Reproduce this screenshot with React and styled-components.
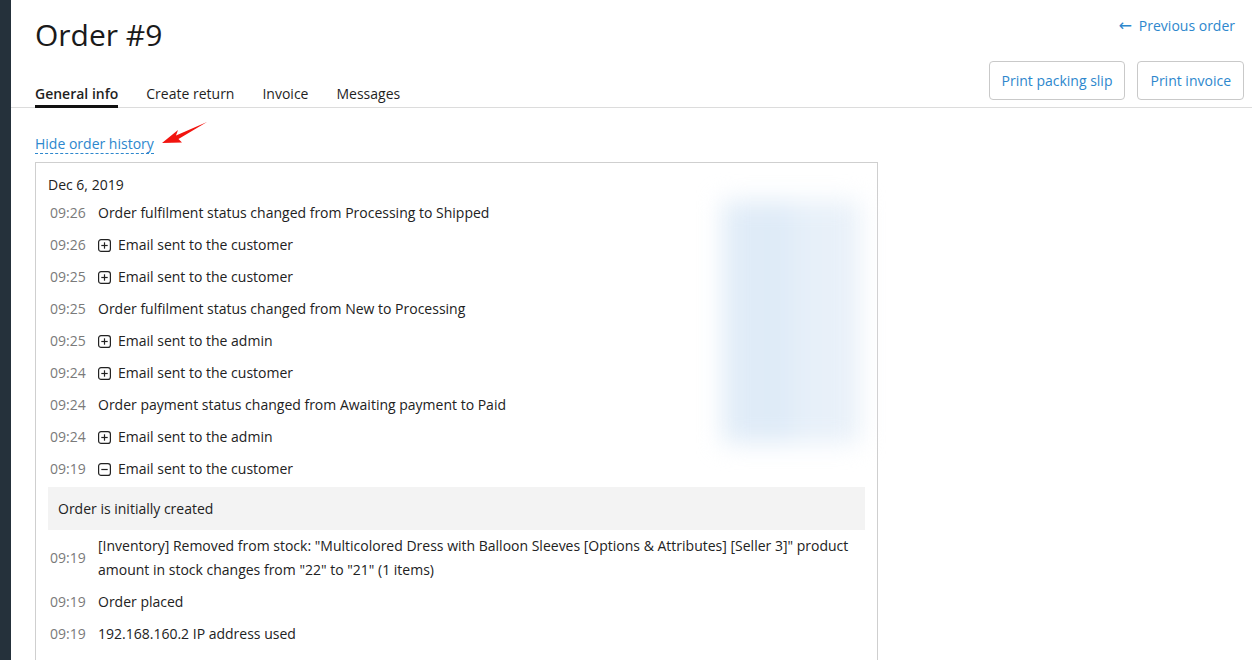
import React from 'react'
import styled, { createGlobalStyle } from 'styled-components'

const GlobalStyle = createGlobalStyle`
  html, body {
    margin: 0;
    padding: 0;
    background: #fff;
    overflow: hidden;
  }
  body {
    font-family: "Open Sans", "Liberation Sans", sans-serif;
    font-size: 14px;
    color: #222;
  }
`

const Page = styled.div`
  display: flex;
  min-height: 660px;
`

const Sidebar = styled.div`
  width: 11px;
  flex-shrink: 0;
  background: #25313b;
`

const Main = styled.main`
  flex: 1;
  min-width: 0;
`

const Header = styled.header`
  border-bottom: 1px solid #dcdcdc;
`

const TopRow = styled.div`
  display: flex;
  justify-content: space-between;
  align-items: flex-start;
  padding: 15px 17px 0 24px;
`

const Title = styled.h1`
  margin: 0;
  font-size: 30px;
  line-height: 40px;
  font-weight: 400;
  color: #1a1a1a;
`

const PrevLink = styled.a`
  margin-top: 1px;
  color: #2d87cd;
  line-height: 20px;
  text-decoration: none;
  cursor: pointer;
`

const Arrow = styled.span`
  font-family: "DejaVu Sans", sans-serif;
  font-size: 16px;
  margin-right: 7px;
`

const BottomRow = styled.div`
  display: flex;
  justify-content: space-between;
  align-items: flex-end;
  padding: 0 8px 0 24px;
  margin-top: 6px;
`

const Tabs = styled.nav`
  display: flex;
  gap: 28px;
`

const Tab = styled.a`
  line-height: 20px;
  padding-bottom: 1px;
  margin-bottom: -1px;
  border-bottom: 3px solid ${p => (p.$active ? '#111' : 'transparent')};
  font-weight: ${p => (p.$active ? 600 : 400)};
  color: #1f1f1f;
  cursor: pointer;
`

const Actions = styled.div`
  display: flex;
  gap: 12px;
  margin-bottom: 7px;
`

const Button = styled.button`
  height: 39px;
  padding: 0 12px;
  border: 1px solid #c9c9c9;
  border-radius: 4px;
  background: #fff;
  color: #2d87cd;
  font-family: inherit;
  font-size: 14px;
  cursor: pointer;
`

const Content = styled.section`
  padding: 27px 24px 0 24px;
`

const LinkRow = styled.div`
  position: relative;
  display: flex;
`

const ToggleLink = styled.a`
  color: #2d87cd;
  line-height: 18px;
  border-bottom: 1px dashed #2d87cd;
  cursor: pointer;
`

const Annotation = styled.svg`
  position: absolute;
  left: 125px;
  top: -14px;
`

const History = styled.div`
  position: relative;
  width: 843px;
  box-sizing: border-box;
  margin-top: 8px;
  padding: 10px 12px 0;
  border: 1px solid #cfcfcf;
  border-bottom: none;
`

const DateLine = styled.div`
  line-height: 24px;
`

const Row = styled.div`
  display: grid;
  grid-template-columns: 50px 1fr;
  align-items: center;
  padding: 4px 0;
  line-height: 24px;
`

const Time = styled.span`
  padding-left: 2px;
  color: #7a7a7a;
`

const Event = styled.span`
  display: flex;
  align-items: center;
  gap: 7px;
`

const Note = styled.div`
  margin-top: 2px;
  padding: 11px 10px;
  line-height: 21px;
  background: #f3f3f3;
`

const Blurred = styled.div`
  position: absolute;
  top: 38px;
  left: 686px;
  width: 138px;
  height: 242px;
  background: linear-gradient(90deg, #e2edf8 0%, #ddeaf7 40%, #e7f0f9 60%, #e9f1f9 100%);
  filter: blur(12px);
  pointer-events: none;
`

const ToggleIcon = ({ open }) => (
  <svg width="13" height="13" viewBox="0 0 13 13" fill="none" stroke="#222" strokeWidth="1.2">
    <rect x="0.6" y="0.6" width="11.8" height="11.8" rx="2.5" />
    <path d="M3.3 6.5h6.4" />
    {!open && <path d="M6.5 3.3v6.4" />}
  </svg>
)

const events = [
  { time: '09:26', text: 'Order fulfilment status changed from Processing to Shipped' },
  { time: '09:26', text: 'Email sent to the customer', toggle: true },
  { time: '09:25', text: 'Email sent to the customer', toggle: true },
  { time: '09:25', text: 'Order fulfilment status changed from New to Processing' },
  { time: '09:25', text: 'Email sent to the admin', toggle: true },
  { time: '09:24', text: 'Email sent to the customer', toggle: true },
  { time: '09:24', text: 'Order payment status changed from Awaiting payment to Paid' },
  { time: '09:24', text: 'Email sent to the admin', toggle: true },
  { time: '09:19', text: 'Email sent to the customer', toggle: true, open: true, note: 'Order is initially created' },
  {
    time: '09:19',
    text: '[Inventory] Removed from stock: "Multicolored Dress with Balloon Sleeves [Options & Attributes] [Seller 3]" product amount in stock changes from "22" to "21" (1 items)',
  },
  { time: '09:19', text: 'Order placed' },
  { time: '09:19', text: '192.168.160.2 IP address used' },
  { time: '09:19', text: 'Email sent to the admin', toggle: true },
]

const App = () => (
  <>
    <GlobalStyle />
    <Page>
      <Sidebar />
      <Main>
        <Header>
          <TopRow>
            <Title>Order #9</Title>
            <PrevLink><Arrow>←</Arrow>Previous order</PrevLink>
          </TopRow>
          <BottomRow>
            <Tabs>
              <Tab $active>General info</Tab>
              <Tab>Create return</Tab>
              <Tab>Invoice</Tab>
              <Tab>Messages</Tab>
            </Tabs>
            <Actions>
              <Button>Print packing slip</Button>
              <Button>Print invoice</Button>
            </Actions>
          </BottomRow>
        </Header>

        <Content>
          <LinkRow>
            <ToggleLink>Hide order history</ToggleLink>
            <Annotation width="50" height="26" viewBox="0 0 50 26">
              <path d="M2 22 L18 9 L16 14.5 L47 1 L18.5 18 L22 21.5 Z" fill="#f2140f" />
            </Annotation>
          </LinkRow>

          <History>
            <DateLine>Dec 6, 2019</DateLine>
            {events.map((e, i) => (
              <React.Fragment key={i}>
                <Row>
                  <Time>{e.time}</Time>
                  <Event>
                    {e.toggle && <ToggleIcon open={e.open} />}
                    <span>{e.text}</span>
                  </Event>
                </Row>
                {e.note && <Note>{e.note}</Note>}
              </React.Fragment>
            ))}
            <Blurred />
          </History>
        </Content>
      </Main>
    </Page>
  </>
)

export default App
